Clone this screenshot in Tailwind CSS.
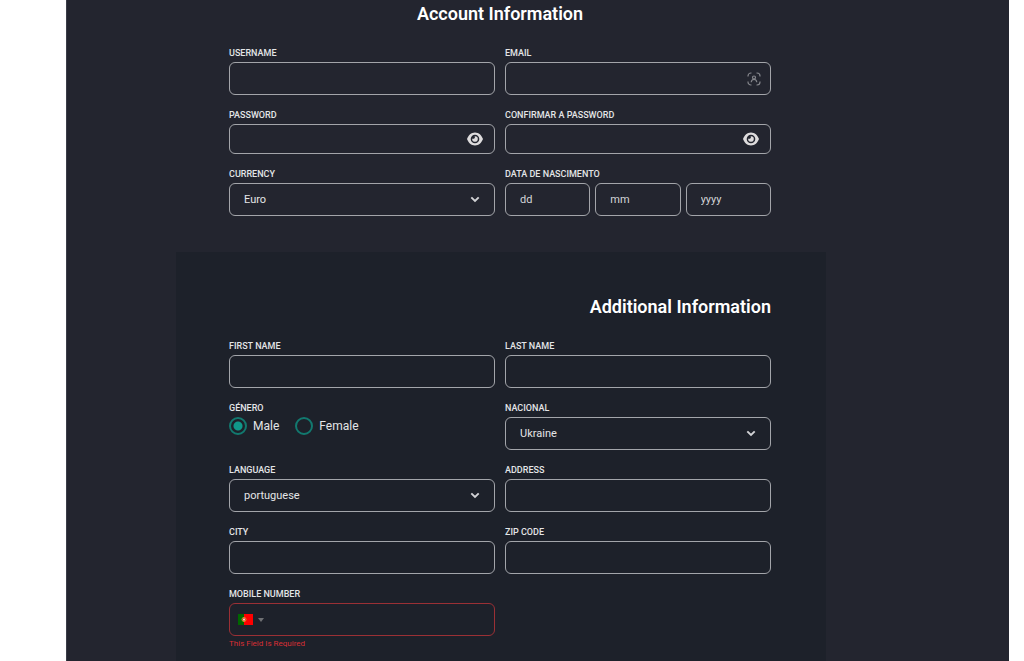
<!DOCTYPE html>
<html lang="pt">
<head>
<meta charset="utf-8">
<meta name="viewport" content="width=device-width, initial-scale=1">
<title>Account Information</title>
<script src="https://cdn.jsdelivr.net/npm/@tailwindcss/browser@4"></script>
</head>
<body class="bg-white pr-[15px] pl-[66px] font-['Roboto','Liberation_Sans',sans-serif] text-[11px] text-[#e4e5e7]">
<svg class="hidden" aria-hidden="true">
  <symbol id="eye" viewBox="0 0 16 14"><path fill="currentColor" fill-rule="evenodd" d="M8 .5C11.8.5 14.6 3.300 16 7c-1.400 3.700-4.200 6.500-8 6.500S1.400 10.700 0 7C1.400 3.300 4.200.5 8 .5ZM8 2.700a4.300 4.300 0 1 0 0 8.600 4.300 4.300 0 0 0 0-8.600Z"/><path fill="currentColor" d="M8 4.200a2.800 2.800 0 1 1-2.700 2.200c.3.300.7.400 1.100.4.900 0 1.500-.7 1.500-1.500 0-.4-.1-.8-.4-1.100H8Z"/></symbol>
  <symbol id="chevron" viewBox="0 0 10 7"><path d="M1.300 1.400 5 5l3.700-3.600" fill="none" stroke="currentColor" stroke-width="1.900"/></symbol>
</svg>
<main class="min-h-screen border-l border-[#3b3d48] bg-[#23252f] pt-px pl-[109px]">
<form class="max-w-[650px]">
  <section class="pr-[55px] pb-9 pl-[53px]">
    <h2 class="mb-[17px] text-center text-lg/[26px] font-semibold text-white">Account Information</h2>
    <div class="grid grid-cols-2 gap-x-2.5 gap-y-[11px]">
      <div class="flex flex-col">
        <label for="username" class="text-[9px]/[18px] font-medium">USERNAME</label>
        <input id="username" type="text" class="h-[33px] w-full rounded-md border border-[#a3a5aa] px-3.5">
      </div>
      <div class="flex flex-col">
        <label for="email" class="text-[9px]/[18px] font-medium">EMAIL</label>
        <div class="relative">
          <input id="email" type="email" class="block h-[33px] w-full rounded-md border border-[#a3a5aa] px-3.5">
          <svg class="absolute top-[10px] right-[10px] size-3.5 text-[#85868c]" viewBox="0 0 14 14" fill="none" stroke="currentColor" stroke-width="1.200" aria-hidden="true"><path d="M1 4.500V4a3 3 0 0 1 3-3h.5M9.500 1h.5a3 3 0 0 1 3 3v.5M13 9.500v.5a3 3 0 0 1-3 3h-.5M4.500 13H4a3 3 0 0 1-3-3v-.5"/><circle cx="7" cy="5.500" r="1.500"/><path d="M4.200 10.300C4.400 8.400 5.300 7.300 7 7.300s2.600 1.100 2.800 3"/></svg>
        </div>
      </div>
      <div class="flex flex-col">
        <label for="password" class="text-[9px]/[18px] font-medium">PASSWORD</label>
        <div class="relative">
          <input id="password" type="password" class="block h-[30px] w-full rounded-md border border-[#a3a5aa] px-3.5">
          <button type="button" aria-label="Show password" class="absolute top-2 right-3 text-[#dedcdd]"><svg class="block h-3.5 w-4"><use href="#eye"/></svg></button>
        </div>
      </div>
      <div class="flex flex-col">
        <label for="confirm" class="text-[9px]/[18px] font-medium">CONFIRMAR A PASSWORD</label>
        <div class="relative">
          <input id="confirm" type="password" class="block h-[30px] w-full rounded-md border border-[#a3a5aa] px-3.5">
          <button type="button" aria-label="Show password" class="absolute top-2 right-3 text-[#dedcdd]"><svg class="block h-3.5 w-4"><use href="#eye"/></svg></button>
        </div>
      </div>
      <div class="flex flex-col">
        <label for="currency" class="text-[9px]/[18px] font-medium">CURRENCY</label>
        <div class="relative">
          <select id="currency" class="block h-[33px] w-full appearance-none rounded-md border border-[#a3a5aa] bg-transparent px-3.5 pt-px"><option>Euro</option></select>
          <svg class="pointer-events-none absolute top-[13px] right-[15px] h-[7px] w-2.5 text-[#d2d3d6]"><use href="#chevron"/></svg>
        </div>
      </div>
      <fieldset class="flex min-w-0 flex-col">
        <legend class="text-[9px]/[18px] font-medium">DATA DE NASCIMENTO</legend>
        <div class="grid grid-cols-3 gap-[5px]">
          <input type="text" placeholder="dd" aria-label="dd" class="h-[33px] w-full rounded-md border border-[#a3a5aa] px-3.5 placeholder:text-[#d4d5d8]">
          <input type="text" placeholder="mm" aria-label="mm" class="h-[33px] w-full rounded-md border border-[#a3a5aa] px-3.5 placeholder:text-[#d4d5d8]">
          <input type="text" placeholder="yyyy" aria-label="yyyy" class="h-[33px] w-full rounded-md border border-[#a3a5aa] px-3.5 placeholder:text-[#d4d5d8]">
        </div>
      </fieldset>
    </div>
  </section>
  <section class="bg-[#1d212a] pt-[42px] pr-[55px] pb-[11px] pl-[53px]">
    <h2 class="mb-[17px] text-right text-lg/[26px] font-semibold text-white">Additional Information</h2>
    <div class="grid grid-cols-2 gap-x-2.5 gap-y-[11px]">
      <div class="flex flex-col">
        <label for="first" class="text-[9px]/[18px] font-medium">FIRST NAME</label>
        <input id="first" type="text" class="h-[33px] w-full rounded-md border border-[#a3a5aa] px-3.5">
      </div>
      <div class="flex flex-col">
        <label for="last" class="text-[9px]/[18px] font-medium">LAST NAME</label>
        <input id="last" type="text" class="h-[33px] w-full rounded-md border border-[#a3a5aa] px-3.5">
      </div>
      <fieldset class="min-w-0">
        <legend class="text-[9px]/[18px] font-medium">GÉNERO</legend>
        <div class="flex gap-4 text-xs/[18px]">
          <label class="flex gap-1.5"><input type="radio" name="gender" checked class="size-[18px] appearance-none rounded-full border-2 border-[#12796f] outline-[#128c7e] checked:bg-[radial-gradient(circle,#10988a_4px,transparent_5px)]">Male</label>
          <label class="flex gap-1.5"><input type="radio" name="gender" class="size-[18px] appearance-none rounded-full border-2 border-[#12796f] outline-[#128c7e] checked:bg-[radial-gradient(circle,#10988a_4px,transparent_5px)]">Female</label>
        </div>
      </fieldset>
      <div class="flex flex-col">
        <label for="national" class="text-[9px]/[18px] font-medium">NACIONAL</label>
        <div class="relative">
          <select id="national" class="block h-[33px] w-full appearance-none rounded-md border border-[#a3a5aa] bg-transparent px-3.5 pt-px"><option>Ukraine</option></select>
          <svg class="pointer-events-none absolute top-[13px] right-[15px] h-[7px] w-2.5 text-[#d2d3d6]"><use href="#chevron"/></svg>
        </div>
      </div>
      <div class="flex flex-col">
        <label for="language" class="text-[9px]/[18px] font-medium">LANGUAGE</label>
        <div class="relative">
          <select id="language" class="block h-[33px] w-full appearance-none rounded-md border border-[#a3a5aa] bg-transparent px-3.5 pt-px"><option>portuguese</option></select>
          <svg class="pointer-events-none absolute top-[13px] right-[15px] h-[7px] w-2.5 text-[#d2d3d6]"><use href="#chevron"/></svg>
        </div>
      </div>
      <div class="flex flex-col">
        <label for="address" class="text-[9px]/[18px] font-medium">ADDRESS</label>
        <input id="address" type="text" class="h-[33px] w-full rounded-md border border-[#a3a5aa] px-3.5">
      </div>
      <div class="flex flex-col">
        <label for="city" class="text-[9px]/[18px] font-medium">CITY</label>
        <input id="city" type="text" class="h-[33px] w-full rounded-md border border-[#a3a5aa] px-3.5">
      </div>
      <div class="flex flex-col">
        <label for="zip" class="text-[9px]/[18px] font-medium">ZIP CODE</label>
        <input id="zip" type="text" class="h-[33px] w-full rounded-md border border-[#a3a5aa] px-3.5">
      </div>
      <div class="flex flex-col">
        <label for="mobile" class="text-[9px]/[18px] font-medium">MOBILE NUMBER</label>
        <div class="flex h-[33px] items-center rounded-md border border-[#9b3035] pl-2">
          <button type="button" aria-label="Portugal" class="flex items-center gap-1">
            <svg class="h-[11px] w-[15px]" viewBox="0 0 16 11" preserveAspectRatio="none" aria-hidden="true"><path fill="#f00" d="M0 0h16v11H0z"/><path fill="#060" d="M0 0h6.400v11H0z"/><circle cx="6.400" cy="5.500" r="2.100" fill="none" stroke="#d8b82c" stroke-width=".9"/><path d="M5.200 4.200h2.400v1.600c0 1.600-2.400 1.600-2.400 0z" fill="#fff" stroke="#e02020" stroke-width=".7"/></svg>
            <svg class="h-1 w-2" viewBox="0 0 8 4" aria-hidden="true"><path fill="#6f7174" d="M1 0h6L4 4z"/></svg>
          </button>
          <input id="mobile" type="tel" class="h-full min-w-0 flex-1 px-2">
        </div>
        <p class="text-[8px]/4 text-[#d82f35]">This Field Is Required</p>
      </div>
    </div>
  </section>
</form>
</main>
</body>
</html>
